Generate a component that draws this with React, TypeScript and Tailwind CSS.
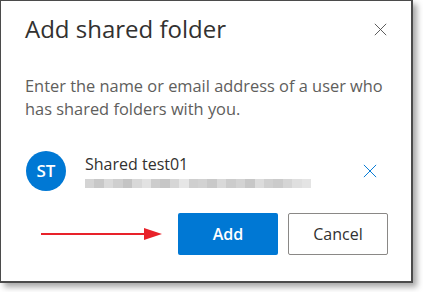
import { FC } from 'react';

const blurBlocks = [
  '#d4d4d4', '#c8c8c8', '#dadada', '#cfcfcf', '#c4c4c4', '#d8d8d8', '#e2e2e2', '#cdcdcd',
  '#c6c6c6', '#d6d6d6', '#e6e6e6', '#cfcfcf', '#d2d2d2', '#c9c9c9', '#d9d9d9', '#cccccc',
  '#d3d3d3', '#c7c7c7', '#dcdcdc', '#d0d0d0', '#cbcbcb', '#d5d5d5', '#dfdfdf', '#e4e4e4',
];

const CloseIcon: FC<{ className?: string }> = ({ className }) => (
  <svg viewBox="0 0 16 16" className={className} fill="none" stroke="currentColor" strokeWidth="1.1">
    <path d="M1 1 L15 15 M15 1 L1 15" />
  </svg>
);

export default function App() {
  return (
    <div className="h-[292px] w-[423px] bg-white" style={{ fontFamily: '"Open Sans", "Noto Sans", sans-serif' }}>
      <div className="h-[283px] w-[413px] border-t border-l border-r-2 border-b-2 border-[#4b4b4b] bg-white shadow-[4px_4px_6px_rgba(0,0,0,0.35)]">
        <div className="flex items-center justify-between pl-[24px] pr-[24px] pt-[13px]">
          <h1 className="text-[24px] leading-[30px] text-[#323130]">Add shared folder</h1>
          <CloseIcon className="h-[13px] w-[13px] text-[#4a4a4a]" />
        </div>

        <p className="mt-[30px] px-[24px] text-[16.4px] leading-[23px] text-[#605e5c]">
          Enter the name or email address of a user who has shared folders with you.
        </p>

        <div className="mt-[31px] flex items-center pl-[25px] pr-[34px]">
          <div className="flex h-[40px] w-[40px] items-center justify-center rounded-full bg-[#0078d4] text-[17px] font-semibold text-white">
            ST
          </div>
          <div className="ml-[19px] flex-1">
            <div className="text-[16px] leading-[20px] text-[#323130]">Shared test01</div>
            <div className="mt-[5px] flex h-[9px] w-[226px] blur-[0.6px]">
              {blurBlocks.map((c, i) => (
                <span key={i} className="h-full flex-1" style={{ backgroundColor: c }} />
              ))}
            </div>
          </div>
          <CloseIcon className="h-[14px] w-[14px] text-[#0078d4]" />
        </div>

        <div className="mt-[22px] flex items-center pl-[40px] pr-[23px]">
          <div className="flex flex-1 items-center">
            <div className="h-[2px] w-[104px] bg-[#e8222a]" />
            <svg width="18" height="12" viewBox="0 0 18 12" className="-ml-[1px]">
              <polygon points="0,0 18,6 0,12" fill="#e8222a" />
            </svg>
          </div>
          <button className="h-[42px] w-[100px] rounded-[2px] bg-[#0078d4] text-[16px] font-semibold text-white">
            Add
          </button>
          <button className="ml-[10px] h-[42px] w-[100px] rounded-[2px] border border-[#8a8886] bg-white text-[16px] text-[#323130]">
            Cancel
          </button>
        </div>
      </div>
    </div>
  );
}
